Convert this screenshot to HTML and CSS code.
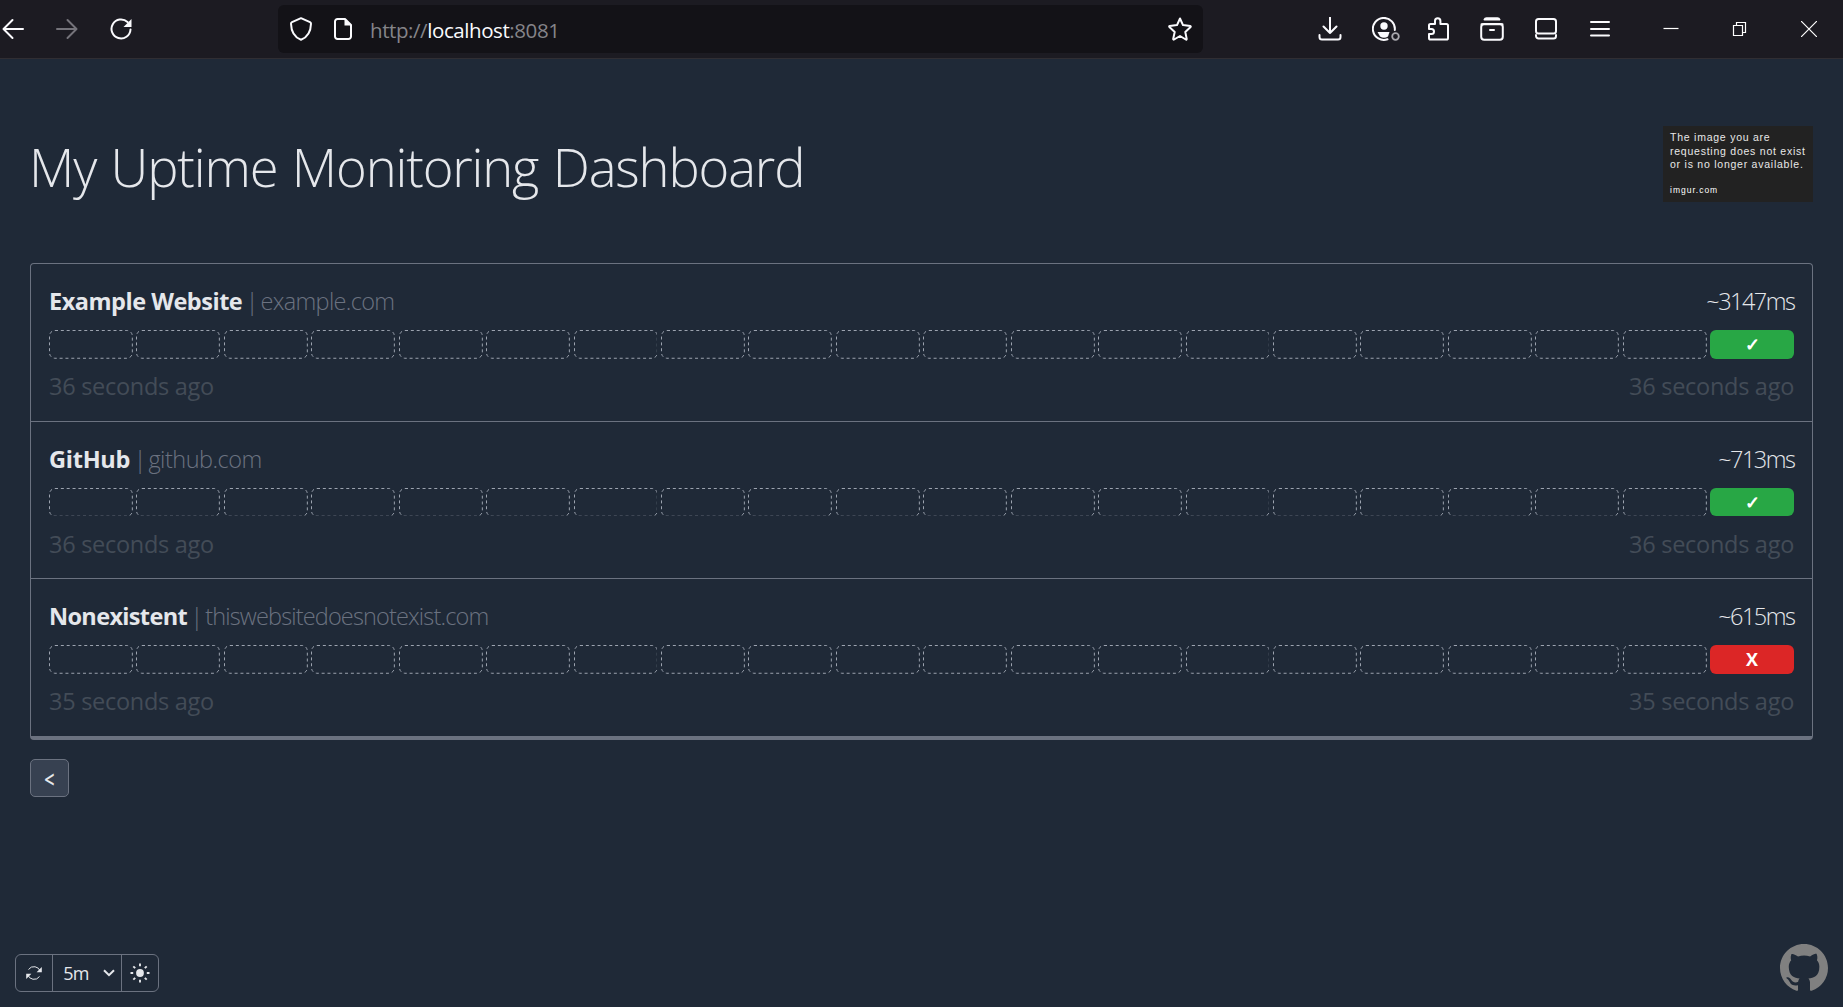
FILE: index.html
```html
<!DOCTYPE html>
<html lang="en">
<head>
<meta charset="utf-8">
<title>My Uptime Monitoring Dashboard</title>
<link rel="stylesheet" href="styles.css">
</head>
<body>
<div class="toolbar">
  <div class="nav">
    <svg class="ico" viewBox="0 0 22 22"><path d="M21 11H2M10.5 2 1.5 11l9 9"/></svg>
    <svg class="ico dim" viewBox="0 0 22 22"><path d="M1 11h19M11.500 2l9 9-9 9"/></svg>
    <svg class="ico" viewBox="0 0 22 22"><path d="M20.500 11.500A9.500 9.500 0 1 1 17.500 4"/><path class="solid" d="M21.500 1v8h-8z"/></svg>
  </div>
  <div class="urlbar">
    <svg class="ico shield" viewBox="0 0 22 24"><path d="M11 1.200 20 5.200c.8.400 1 .8 1 1.500C20.800 14 18 20 11 22.800 4 20 1.200 14 1 6.700c0-.7.200-1.100 1-1.500z"/></svg>
    <svg class="ico page" viewBox="0 0 18 22"><path d="M11 1H3.500A2.500 2.500 0 0 0 1 3.500v15A2.500 2.500 0 0 0 3.500 21h11a2.500 2.500 0 0 0 2.500-2.500V7z"/><path class="solid" d="M10.500 1v6.500H17z"/></svg>
    <span class="url">http://<span class="host">localhost</span>:8081</span>
    <svg class="ico star" viewBox="0 0 24 24"><path d="M12 1.500l3 6.600 7.300.9c.5.100.6.600.3 1l-5.300 5 1.400 6.900c.1.600-.4.900-.9.600L12 19l-5.900 3.500c-.5.300-1-.1-.9-.6L6.700 15l-5.300-5c-.4-.4-.2-.9.300-1L9 8.100z"/></svg>
  </div>
  <div class="actions">
    <svg class="ico" viewBox="0 0 24 24"><path d="M12 0.500V16M5.500 9.500 12 16l6.500-6.500M1.500 18v2a2.500 2.500 0 0 0 2.500 2.500h16a2.500 2.500 0 0 0 2.500-2.500v-2"/></svg>
    <svg class="ico account" viewBox="0 0 28 24"><path d="M22.800 13A11 11 0 1 0 15.500 22.300"/><circle class="solid" cx="12" cy="9" r="3.700"/><path class="solid" d="M5.500 15h12l-1.500 4.500q-4 2.500-8 0z"/><circle class="ring" cx="23.500" cy="19.500" r="3.300"/></svg>
    <svg class="ico" viewBox="0 0 24 24"><path d="M3 12V8.500C3 7.400 3.500 7 4.500 7H9V4a2.700 2.700 0 0 1 5.400 0v3h6A1.600 1.600 0 0 1 22 8.600V21a1.600 1.600 0 0 1-1.600 1.600H4.600A1.600 1.600 0 0 1 3 21v-4h2.500a2.500 2.500 0 0 0 0-5z"/></svg>
    <svg class="ico" viewBox="0 0 24 24"><path d="M4.500 2.500Q5 1.200 6.500 1.200h11q1.500 0 2 1.300z"/><rect x="1.200" y="7" width="21.600" height="15.800" rx="3"/><path d="M1.500 7.300h21M10 13h4"/></svg>
    <svg class="ico" viewBox="0 0 24 24"><rect x="2" y="2" width="20" height="14.500" rx="2.500"/><path d="M2 18v1a2.500 2.500 0 0 0 2.500 2.500h15A2.500 2.500 0 0 0 22 19v-1"/></svg>
    <svg class="ico" viewBox="0 0 24 24"><path d="M3 5h18M3 12h18M3 18.500h18"/></svg>
  </div>
  <div class="window">
    <svg class="thin" viewBox="0 0 16 16"><path d="M.5 7.500h15"/></svg>
    <svg class="thin" viewBox="0 0 16 16"><path d="M1.500 4.500h9v10h-9zM4.500 4.500v-3h9v10h-3"/></svg>
    <svg class="thin" viewBox="0 0 16 16"><path d="M0 0l16 16M16 0 0 16"/></svg>
  </div>
</div>

<main class="page-body">
  <header class="head">
    <h1>My Uptime Monitoring Dashboard</h1>
    <div class="logo">
      <p>The image you are<br>requesting does not exist<br>or is no longer available.</p>
      <small>imgur.com</small>
    </div>
  </header>

  <section class="board">
    <article class="endpoint">
      <div class="line"><div><b>Example Website</b><span class="sep">|</span><span class="domain">example.com</span></div><span class="ms">~3147ms</span></div>
      <div class="cells"><svg><rect/></svg><svg><rect/></svg><svg><rect/></svg><svg><rect/></svg><svg><rect/></svg><svg><rect/></svg><svg><rect/></svg><svg><rect/></svg><svg><rect/></svg><svg><rect/></svg><svg><rect/></svg><svg><rect/></svg><svg><rect/></svg><svg><rect/></svg><svg><rect/></svg><svg><rect/></svg><svg><rect/></svg><svg><rect/></svg><svg><rect/></svg><span class="up">✓</span></div>
      <div class="line ago"><span>36 seconds ago</span><span>36 seconds ago</span></div>
    </article>
    <article class="endpoint">
      <div class="line"><div><b class="loose">GitHub</b><span class="sep">|</span><span class="domain short">github.com</span></div><span class="ms">~713ms</span></div>
      <div class="cells"><svg><rect/></svg><svg><rect/></svg><svg><rect/></svg><svg><rect/></svg><svg><rect/></svg><svg><rect/></svg><svg><rect/></svg><svg><rect/></svg><svg><rect/></svg><svg><rect/></svg><svg><rect/></svg><svg><rect/></svg><svg><rect/></svg><svg><rect/></svg><svg><rect/></svg><svg><rect/></svg><svg><rect/></svg><svg><rect/></svg><svg><rect/></svg><span class="up">✓</span></div>
      <div class="line ago"><span>36 seconds ago</span><span>36 seconds ago</span></div>
    </article>
    <article class="endpoint">
      <div class="line"><div><b class="tight">Nonexistent</b><span class="sep">|</span><span class="domain long">thiswebsitedoesnotexist.com</span></div><span class="ms">~615ms</span></div>
      <div class="cells"><svg><rect/></svg><svg><rect/></svg><svg><rect/></svg><svg><rect/></svg><svg><rect/></svg><svg><rect/></svg><svg><rect/></svg><svg><rect/></svg><svg><rect/></svg><svg><rect/></svg><svg><rect/></svg><svg><rect/></svg><svg><rect/></svg><svg><rect/></svg><svg><rect/></svg><svg><rect/></svg><svg><rect/></svg><svg><rect/></svg><svg><rect/></svg><span class="down">X</span></div>
      <div class="line ago"><span>35 seconds ago</span><span>35 seconds ago</span></div>
    </article>
  </section>
  <button class="prev"><span>&lt;</span></button>

  <footer class="foot">
    <div class="settings">
      <span class="refresh"><svg viewBox="0 0 16 16"><path d="M14.300 6.500A6.600 6.600 0 0 0 2.500 4.500M1.700 9.500A6.600 6.600 0 0 0 13.500 11.500"/><path class="fill" d="M15.800 2v5.200h-5.200zM.2 14V8.800h5.200z"/></svg></span>
      <span class="interval">5m<svg viewBox="0 0 12 8"><path d="M1 1.200l5 5 5-5"/></svg></span>
      <span class="theme"><svg viewBox="0 0 20 20"><circle cx="10" cy="10" r="3.900"/><path d="M10 .5v2.700M10 16.800v2.700M.5 10h2.700M16.800 10h2.700M3.300 3.300l1.900 1.900M14.800 14.800l1.900 1.900M3.300 16.700l1.900-1.900M14.800 5.200l1.900-1.900"/></svg></span>
    </div>
    <svg class="github" viewBox="0 0 16 16"><path d="M8 0C3.580 0 0 3.580 0 8c0 3.540 2.290 6.530 5.470 7.590.4.070.55-.17.55-.38 0-.19-.01-.82-.01-1.490-2.010.37-2.530-.49-2.690-.94-.09-.23-.48-.94-.82-1.130-.28-.15-.68-.52-.01-.53.63-.01 1.080.58 1.230.82.72 1.210 1.870.87 2.330.66.07-.52.28-.87.51-1.070-1.780-.2-3.640-.89-3.640-3.950 0-.87.31-1.590.82-2.150-.08-.2-.36-1.020.08-2.120 0 0 .67-.21 2.200.82.64-.18 1.320-.27 2-.27s1.360.09 2 .27c1.530-1.040 2.200-.82 2.200-.82.44 1.100.16 1.920.08 2.120.51.56.82 1.270.82 2.150 0 3.070-1.870 3.750-3.650 3.950.29.25.54.73.54 1.480 0 1.070-.01 1.930-.01 2.200 0 .21.15.46.55.38A8.010 8.010 0 0 0 16 8c0-4.420-3.580-8-8-8z"/></svg>
  </footer>
</main>
</body>
</html>
```
FILE: styles.css
```css
* { box-sizing: border-box; margin: 0; }
body {
  height: 1007px;
  display: flex;
  flex-direction: column;
  background: #1f2937;
  color: #e5e7eb;
  font-family: "Open Sans", "Noto Sans", sans-serif;
  overflow: hidden;
}
svg { display: block; flex: none; }

/* Browser toolbar */
.toolbar {
  flex: none;
  height: 59px;
  display: flex;
  align-items: center;
  background: #1c1b22;
  border-bottom: 1px solid #302e33;
}
.ico {
  width: 24px;
  height: 24px;
  fill: none;
  stroke: #fbfbfe;
  stroke-width: 2;
  stroke-linecap: round;
  stroke-linejoin: round;
}
.ico .solid { fill: #fbfbfe; stroke: none; }
.ico .ring { stroke: #a9a8ad; stroke-width: 1.8; }
.nav { width: 278px; display: flex; gap: 32px; padding-left: 2px; }
.nav .ico { width: 22px; height: 22px; }
.nav .ico.dim { stroke: #74737a; }
.urlbar {
  width: 925px;
  height: 48px;
  display: flex;
  align-items: center;
  padding: 0 11px 0 12px;
  border-radius: 6px;
  background: #131217;
}
.ico.shield { width: 22px; margin-right: 22px; }
.ico.page { width: 18px; height: 22px; margin-right: 18px; }
.ico.star { margin-left: auto; }
.url { padding-top: 1px; font-size: 20.5px; letter-spacing: -0.42px; color: #858489; }
.host { color: #fbfbfe; }
.actions { display: flex; gap: 30px; margin-left: 115px; }
.actions .account { width: 28px; margin-right: -4px; }
.window { display: flex; gap: 53px; margin-left: auto; margin-right: 26px; }
.thin { width: 16px; height: 16px; fill: none; stroke: #fff; stroke-width: 1.2; }

/* Page */
.page-body { flex: 1; display: flex; flex-direction: column; padding: 67px 30px 15px; }
.head { height: 76px; display: flex; justify-content: space-between; align-items: center; }
h1 {
  padding-top: 5px;
  font-size: 52.5px;
  font-weight: 300;
  line-height: 72px;
  letter-spacing: -1.15px;
  word-spacing: 2px;
  margin-left: -1px;
}
.logo {
  width: 150px;
  height: 76px;
  padding: 5px 0 0 7px;
  background: #222;
  color: #e8e8e8;
  font-family: "Liberation Sans", Arial, sans-serif;
  white-space: nowrap;
}
.logo p { font-size: 10.500px; line-height: 13.600px; letter-spacing: 0.76px; }
.logo small { display: block; margin-top: 12px; font-size: 8.500px; line-height: 12px; letter-spacing: 1px; color: #fff; }

.board {
  margin-top: 61px;
  border: 1px solid #6b7280;
  border-bottom-width: 4px;
  border-radius: 4px;
}
.endpoint { height: 157.5px; padding: 19px 18px 0; border-bottom: 1px solid #6b7280; }
.endpoint:last-child { height: 157px; border-bottom: 0; }
.line { display: flex; justify-content: space-between; font-size: 23.5px; line-height: 36px; }
.line b { font-weight: 700; letter-spacing: -0.48px; }
.line b.loose { letter-spacing: -0.25px; }
.line b.tight { letter-spacing: -0.65px; }
.sep, .domain { font-weight: 300; color: #6b7280; }
.sep { margin: 0 2px 0 3.5px; }
.domain { letter-spacing: -0.68px; }
.domain.short { letter-spacing: -0.5px; }
.domain.long { letter-spacing: -0.85px; }
.ms { font-weight: 300; letter-spacing: -1.5px; margin-right: -0.5px; }
.cells { display: grid; grid-template-columns: repeat(20, 1fr); gap: 3.6px; height: 28.75px; margin: 11px 0 9.25px; }
.cells svg { width: 100%; height: 100%; }
.cells rect {
  x: 0.5px;
  y: 0.5px;
  width: calc(100% - 1px);
  height: calc(100% - 1px);
  rx: 5.5px;
  fill: none;
  stroke: #9ca3af;
  stroke-dasharray: 3 2.85;
}
.cells span { display: grid; place-items: center; border-radius: 6px; color: #fff; font-size: 18px; font-weight: 700; line-height: 1; }
.up { background: #28a745; }
.down { background: #dc2626; }
.ago { color: #434c57; letter-spacing: -0.28px; }

.prev {
  align-self: flex-start;
  width: 39px;
  height: 38px;
  margin-top: 19px;
  padding: 0;
  border: 1px solid #6b7280;
  border-radius: 5px;
  background: #374151;
  color: #e5e7eb;
  font: 600 18px "Open Sans", sans-serif;
}
.prev span { display: inline-block; transform: translateY(1px) scaleY(1.3); }

.foot { display: flex; justify-content: space-between; align-items: flex-end; margin: auto -15px 0; }
.settings { display: flex; height: 38px; border: 1px solid #6b7280; border-radius: 6px; }
.settings span { display: flex; align-items: center; justify-content: center; }
.settings path { fill: none; stroke: #e5e7eb; }
.settings .refresh { width: 36px; }
.refresh svg { width: 16px; height: 16px; }
.refresh .fill { fill: #e5e7eb; stroke: none; }
.settings .interval {
  width: 70px;
  gap: 14px;
  padding-left: 4px;
  border: solid #6b7280;
  border-width: 0 1px;
  font-size: 18px;
  letter-spacing: -0.8px;
}
.interval svg { width: 12px; height: 8px; }
.interval path { stroke-width: 2; }
.settings .theme { width: 36px; }
.theme svg { width: 20px; height: 20px; fill: #e5e7eb; }
.theme path { stroke-width: 1.9; }
.github { width: 48px; height: 48px; fill: #808080; }
```
